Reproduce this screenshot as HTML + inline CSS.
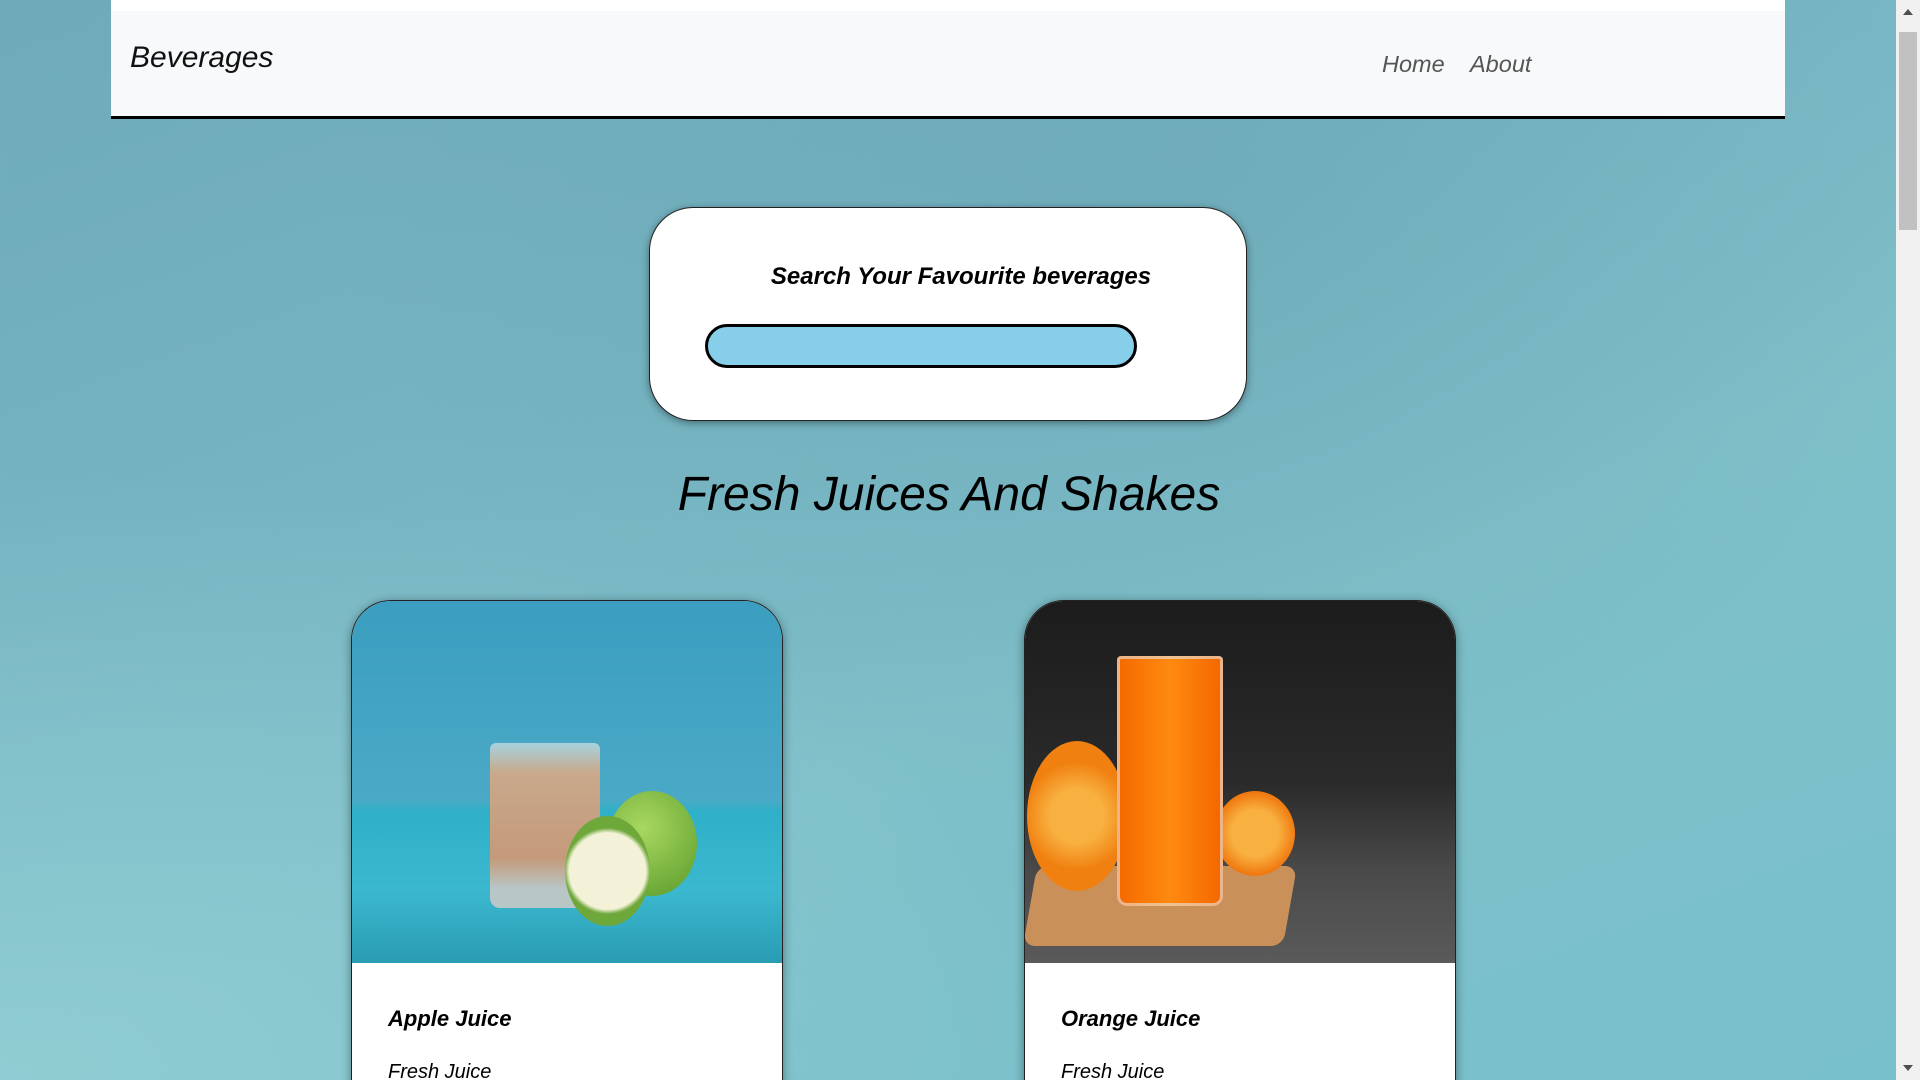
<!DOCTYPE html>
<html><head><meta charset="utf-8"><style>
*{margin:0;padding:0;box-sizing:border-box}
html,body{width:1920px;height:1080px;overflow:hidden}
body{font-family:"Liberation Sans",Arial,sans-serif;position:relative;
background:linear-gradient(160deg,#6eaab8 0%,#76b4c2 35%,#7fc0c9 60%,#78c0cb 100%);}
.bgl{position:absolute;inset:0;background:radial-gradient(ellipse at 0% 100%,rgba(150,210,215,.7),transparent 40%),radial-gradient(ellipse at 60% 20%,rgba(100,160,175,.4),transparent 50%)}
.top{position:absolute;left:111px;top:0;width:1674px;height:11px;background:#fff}
.nav{position:absolute;left:111px;top:11px;width:1674px;height:108px;background:#f8f9fa;border-bottom:3px solid #000}
.brand{position:absolute;left:19px;top:30px;font-size:30px;font-style:italic;color:#111}
.nl{position:absolute;top:40px;font-size:23.5px;font-style:italic;color:#555}
.sb{position:absolute;right:0;top:0;width:24px;height:1080px;background:#f1f1f1}
.sb .th{position:absolute;left:3px;top:32px;width:18px;height:198px;background:#c1c1c1}
.sb .a{position:absolute;left:7px;width:0;height:0;border-left:5px solid transparent;border-right:5px solid transparent}
.search{position:absolute;left:649px;top:207px;width:598px;height:214px;background:#fff;border:1px solid #222;border-radius:44px;box-shadow:0 2px 8px rgba(0,0,0,.4)}
.search p{position:absolute;left:0;width:100%;text-align:center;top:55px;font-size:24px;font-weight:bold;font-style:italic;color:#000;padding-left:26px}
.inp{position:absolute;left:55px;top:116px;width:432px;height:44px;background:#87ceeb;border:3px solid #000;border-radius:22px}
h1{position:absolute;left:0;width:1898px;text-align:center;top:467px;font-size:48px;font-weight:normal;font-style:italic;color:#000}
.card{position:absolute;top:600px;width:432px;height:500px;background:#fff;border:1px solid #222;border-radius:40px 40px 0 0;overflow:hidden;box-shadow:0 2px 10px rgba(0,0,0,.4)}
.img{position:absolute;left:0;top:0;width:100%;height:362px;overflow:hidden}
.card h3{position:absolute;left:36px;top:405px;font-size:22px;font-style:italic;font-weight:bold}
.card .s{position:absolute;left:36px;top:460px;font-size:20px;font-style:italic}
</style></head><body>
<div class="bgl"></div>
<div class="top"></div>
<div class="nav"><div class="brand">Beverages</div>
<div class="nl" style="left:1271px">Home</div><div class="nl" style="left:1359px">About</div></div>
<div class="search"><p>Search Your Favourite beverages</p><div class="inp"></div></div>
<h1>Fresh Juices And Shakes</h1>
<div class="card" style="left:351px">
 <div class="img" style="background:linear-gradient(180deg,#3b9ec0 0%,#4aa9c6 55%,#2fb0c8 58%,#3bb8cf 80%,#2a9cb3 100%)">
  <div style="position:absolute;left:138px;top:142px;width:110px;height:165px;background:linear-gradient(180deg,rgba(230,240,240,.6) 0%,#c9a98c 18%,#c49a7a 70%,#b9c6c6 88%);border-radius:6px 6px 10px 10px"></div>
  <div style="position:absolute;left:255px;top:190px;width:90px;height:105px;background:radial-gradient(circle at 40% 35%,#a8d860,#5a9a2a);border-radius:50%"></div>
  <div style="position:absolute;left:213px;top:215px;width:85px;height:110px;background:radial-gradient(circle at 50% 50%,#f3f2d8 55%,#6ea83a 62%);border-radius:50%"></div>
 </div>
 <h3>Apple Juice</h3><div class="s">Fresh Juice</div></div>
<div class="card" style="left:1024px">
 <div class="img" style="background:linear-gradient(180deg,#1c1c1c 0%,#2a2a2a 50%,#4a4a4a 75%,#5a5a5a 100%)">
  <div style="position:absolute;left:5px;top:265px;width:260px;height:80px;background:#c9905a;border-radius:12px;transform:skewX(-10deg)"></div>
  <div style="position:absolute;left:2px;top:140px;width:100px;height:150px;background:radial-gradient(circle,#f8b040 30%,#f08010 60%);border-radius:50%"></div>
  <div style="position:absolute;left:190px;top:190px;width:80px;height:85px;background:radial-gradient(circle,#f8b040 40%,#f07a10 70%);border-radius:50%"></div>
  <div style="position:absolute;left:92px;top:55px;width:106px;height:250px;background:linear-gradient(90deg,#f46a00,#ff8a10,#f46800);border:3px solid rgba(230,230,230,.6);border-radius:4px 4px 10px 10px"></div>
 </div>
 <h3>Orange Juice</h3><div class="s">Fresh Juice</div></div>
<div class="sb"><div class="a" style="top:9px;border-bottom:6px solid #505050"></div><div class="th"></div><div class="a" style="bottom:9px;border-top:6px solid #505050"></div></div>
</body></html>
